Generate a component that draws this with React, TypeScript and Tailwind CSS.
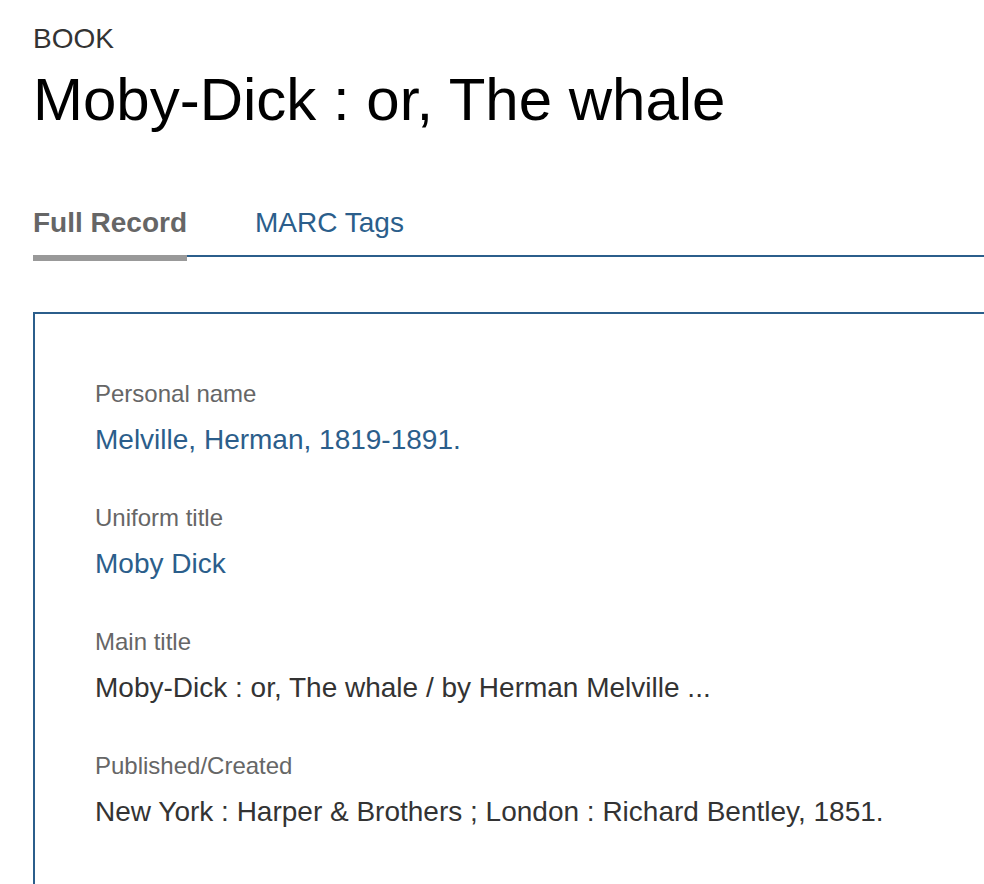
const FIELDS: { label: string; value: string; link?: boolean }[] = [
  { label: "Personal name", value: "Melville, Herman, 1819-1891.", link: true },
  { label: "Uniform title", value: "Moby Dick", link: true },
  { label: "Main title", value: "Moby-Dick : or, The whale / by Herman Melville ..." },
  { label: "Published/Created", value: "New York : Harper & Brothers ; London : Richard Bentley, 1851." },
];

export default function App() {
  return (
    <div className="min-h-screen overflow-hidden bg-white font-['Liberation_Sans',Arial,sans-serif]">
      <header className="pl-[33px] pt-[22.5px]">
        <div className="text-[28px] leading-[32px] text-[#333]">BOOK</div>
        <h1 className="mt-[10px] text-[60px] leading-[69px] text-black">Moby-Dick : or, The whale</h1>
      </header>

      <div className="mr-[-40px] pl-[33px] pb-16">
        <nav className="mt-[73px] flex border-b-2 border-[#2b5e8b]">
          <a className="-mb-[6px] border-b-[6px] border-[#999] pb-4 text-[28px] font-bold leading-[32px] text-[#666]">
            Full Record
          </a>
          <a className="-mb-[6px] ml-[68px] border-b-[6px] border-transparent pb-4 text-[28px] leading-[32px] text-[#2b5e8b]">
            MARC Tags
          </a>
        </nav>

        <section className="mt-[55px] border-2 border-[#2b5e8b] pl-[60px] pt-[66px] pb-32">
          <dl className="flex flex-col gap-[48px]">
            {FIELDS.map((f) => (
              <div key={f.label}>
                <dt className="text-[24px] leading-[28px] text-[#666]">{f.label}</dt>
                <dd
                  className={
                    "mt-4 text-[28px] leading-[32px] " +
                    (f.link ? "text-[#2b5e8b]" : "text-[#333]")
                  }
                >
                  {f.value}
                </dd>
              </div>
            ))}
          </dl>
        </section>
      </div>
    </div>
  );
}
